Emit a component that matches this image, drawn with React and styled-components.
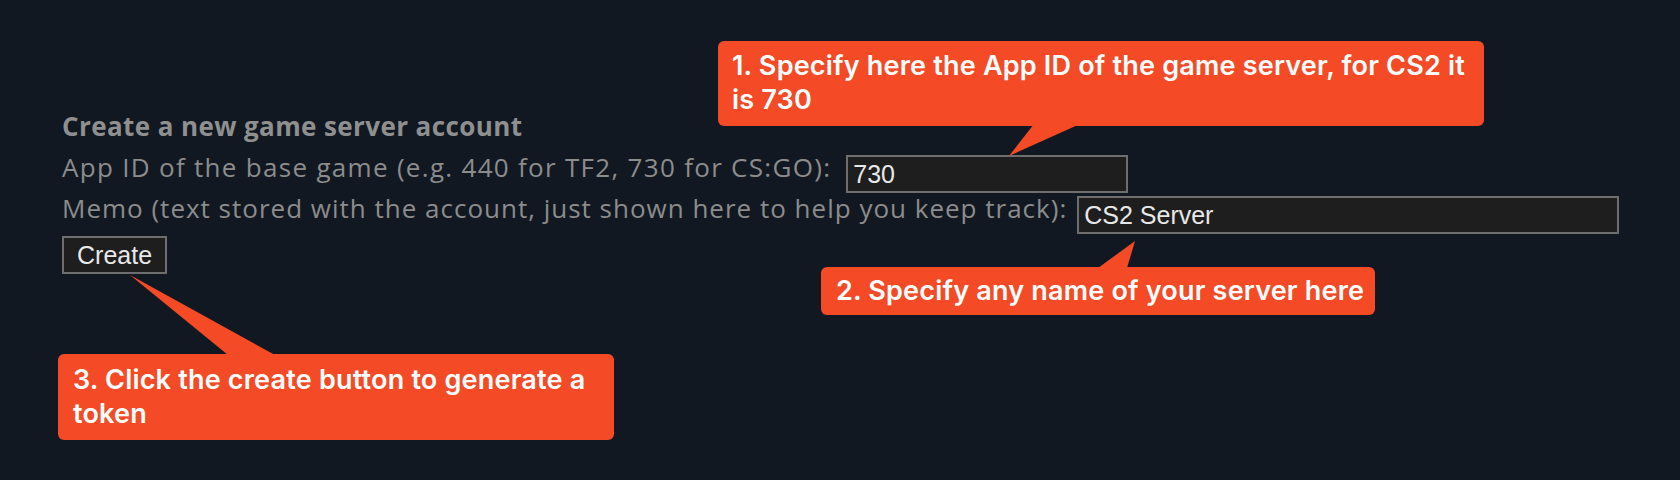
import styled, { createGlobalStyle } from "styled-components";

const GlobalStyle = createGlobalStyle`
  html, body {
    margin: 0;
    padding: 0;
    background: #111822;
  }
`

const Page = styled.div`
  position: relative;
  width: 1680px;
  height: 480px;
  background: #111822;
  overflow: hidden;
`

const Form = styled.div`
  display: flex;
  flex-direction: column;
  align-items: flex-start;
  padding: 111px 0 0 62px;
  font-family: "Open Sans", Lato, sans-serif;
  color: #8c8c8c;
`

const Title = styled.div`
  font-size: 26px;
  font-weight: 700;
  letter-spacing: 0.4px;
  line-height: 30px;
  color: #8f8f8f;
  margin-bottom: 14px;
`

const Row = styled.div`
  display: flex;
  align-items: flex-start;
  gap: ${p => p.$space || 8}px;
  margin-bottom: ${p => p.$gap || 0}px;
`

const Label = styled.span`
  font-size: 26px;
  letter-spacing: ${p => p.$ls || 1}px;
  line-height: 24px;
  white-space: nowrap;
`

const Field = styled.input`
  box-sizing: border-box;
  width: ${p => p.$w}px;
  height: 38px;
  margin: 0;
  padding: 0 5px;
  background: #1e1e1e;
  border: 2px solid #6e6e6e;
  border-radius: 0;
  color: #e8e8e8;
  font-family: "Liberation Sans", Arial, sans-serif;
  font-size: 25px;
  outline: none;
`

const Button = styled.button`
  box-sizing: border-box;
  height: 38px;
  margin: 0;
  padding: 0 13px;
  background: #1e1e1e;
  border: 2px solid #6e6e6e;
  border-radius: 0;
  color: #e8e8e8;
  font-family: "Liberation Sans", Arial, sans-serif;
  font-size: 25px;
  cursor: pointer;
`

const Callout = styled.div`
  position: absolute;
  left: ${p => p.$x}px;
  top: ${p => p.$y}px;
  width: ${p => p.$w}px;
  box-sizing: border-box;
  padding: ${p => p.$pad || "9px 15px"};
  background: #f44a26;
  border-radius: 6px;
  color: #ffffff;
  font-family: Inter, Roboto, "Liberation Sans", sans-serif;
  font-size: 27px;
  font-weight: 600;
  letter-spacing: 0.2px;
  line-height: 34px;
  white-space: nowrap;
`

const Tail = styled.svg`
  position: absolute;
  left: 0;
  top: 0;
  width: 1px;
  height: 1px;
  overflow: visible;
`

export default function App() {
  return (
    <Page>
      <GlobalStyle />
      <Form>
        <Title>Create a new game server account</Title>
        <Row $gap={3} $space={15}>
          <Label $ls={1.3}>App ID of the base game (e.g. 440 for TF2, 730 for CS:GO):</Label>
          <Field $w={282} defaultValue="730" />
        </Row>
        <Row $gap={2} $space={10}>
          <Label>Memo (text stored with the account, just shown here to help you keep track):</Label>
          <Field $w={542} defaultValue="CS2 Server" />
        </Row>
        <Button>Create</Button>
      </Form>

      <Callout $x={718} $y={41} $w={766} $pad="8px 14px 9px">
        <Tail><polygon points="316,83 362,83 291,115" fill="#f44a26" /></Tail>
        1. Specify here the App ID of the game server, for CS2 it<br />is 730
      </Callout>

      <Callout $x={821} $y={267} $w={554} $pad="7px 15px">
        <Tail><polygon points="277,1 306,1 314,-26" fill="#f44a26" /></Tail>
        2. Specify any name of your server here
      </Callout>

      <Callout $x={58} $y={354} $w={556}>
        <Tail><polygon points="170,1 217,1 72,-79" fill="#f44a26" /></Tail>
        3. Click the create button to generate a<br />token
      </Callout>
    </Page>
  )
}
